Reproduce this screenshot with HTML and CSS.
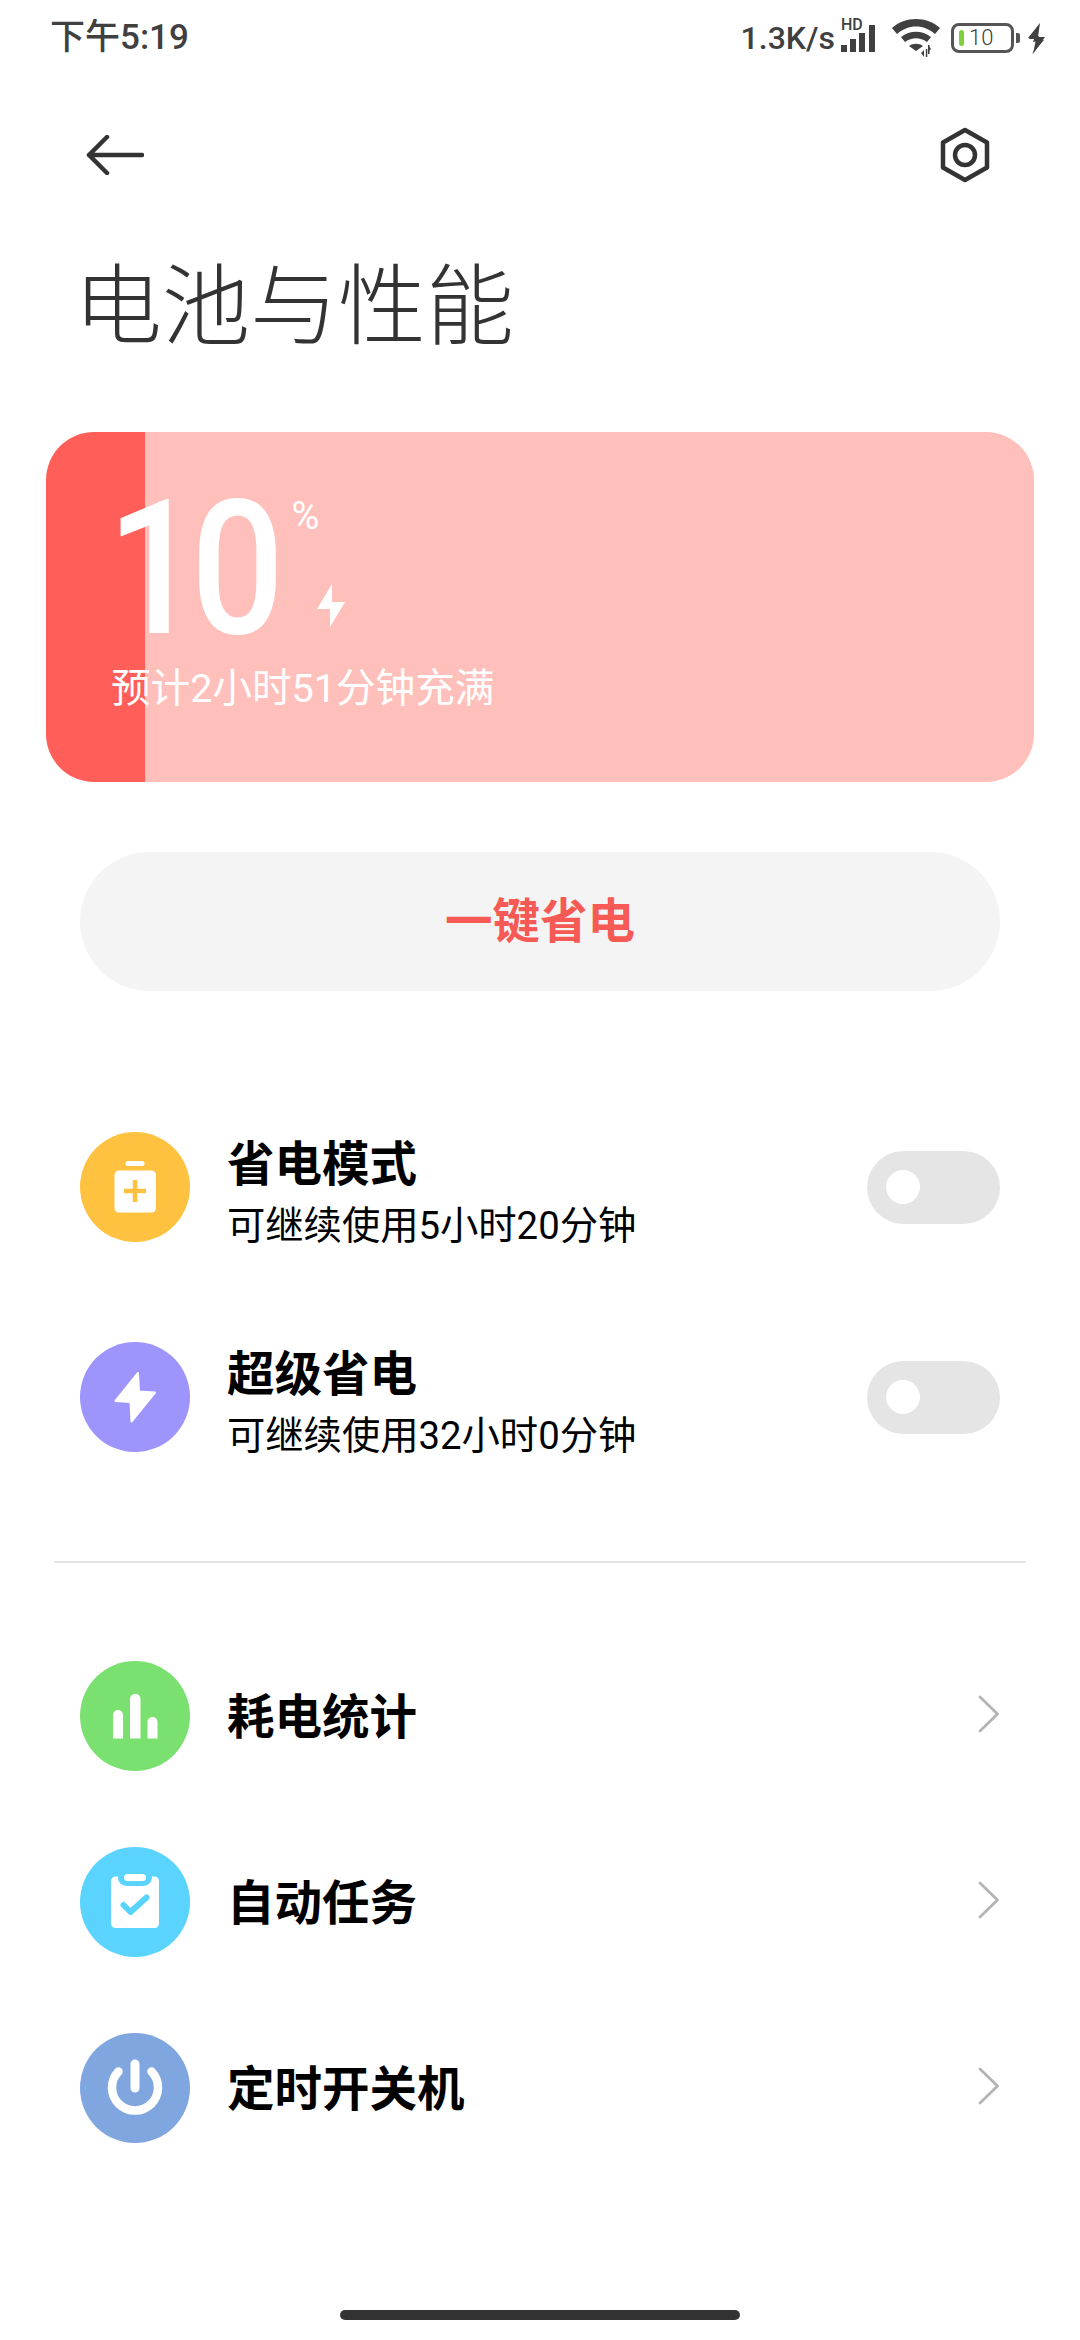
FILE: index.html
```html
<!DOCTYPE html>
<html lang="zh-CN">
<head>
<meta charset="utf-8">
<title>电池与性能</title>
<link rel="stylesheet" href="styles.css">
</head>
<body>
<div class="app">
  <header class="status">
    <span class="time">下午5:19</span>
    <div class="status-right">
      <span class="speed">1.3K/s</span>
      <div class="signal">
        <span class="hd">HD</span>
        <svg class="signal-bars" width="39" height="28" viewBox="0 0 39 28"><g fill="#404040"><rect x="0" y="20" width="6" height="7"/><rect x="9" y="14" width="6" height="13"/><rect x="18" y="8" width="6" height="19"/><rect x="28" y="0" width="6" height="27"/></g></svg>
      </div>
      <svg class="wifi" width="50" height="38" viewBox="0 0 50 38"><g fill="#404040"><path d="M1 9C14-3 36-3 49 9l-5 6C33 5 17 5 6 15z"/><path d="M10 18c9-7 21-7 30 0l-4 5c-7-5-15-5-22 0z"/><path d="M18 27c4-3 10-3 14 0l-7 5z"/><path d="M33 38v-7l-3 3zM37 26v7l3-3z"/><rect x="34.800" y="30" width="1.500" height="8"/><rect x="37" y="26" width="1.500" height="9"/></g></svg>
      <div class="battery">
        <div class="battery-body"><i class="battery-level"></i><span>10</span></div>
        <i class="battery-nub"></i>
      </div>
      <svg class="charge" width="19" height="31" viewBox="0 0 19 31"><path d="M13 0 1 15l6 1-1 3 6-1-7 13 12-14-6-1 1-3-6 1z" fill="#404040"/><path d="M13 0 2 16h7L6 31l12-17h-7z" fill="#404040"/></svg>
    </div>
  </header>

  <nav class="toolbar">
    <svg width="58" height="40" viewBox="0 0 58 40"><path d="M56 20H3M21 2 3 20l18 18" fill="none" stroke="#333" stroke-width="4.500" stroke-linecap="round" stroke-linejoin="round"/></svg>
    <svg width="52" height="56" viewBox="0 0 52 56"><path d="M26 3 48 15.500v25L26 53 4 40.500v-25z" fill="none" stroke="#333" stroke-width="4.500" stroke-linejoin="round"/><circle cx="26" cy="28" r="10" fill="none" stroke="#333" stroke-width="4.500"/></svg>
  </nav>

  <h1 class="title">电池与性能</h1>

  <section class="card">
    <div class="hero">
      <span class="level">10</span>
      <div class="hero-side">
        <span class="percent">%</span>
        <svg class="card-bolt" width="28" height="43" viewBox="0 0 28 43"><path d="M15 0 0 25h13l0 18L28 18H15z" fill="#fff"/></svg>
      </div>
    </div>
    <p class="eta">预计2小时51分钟充满</p>
  </section>

  <button class="saver">一键省电</button>

  <section class="modes">
    <div class="row">
      <svg class="icon" viewBox="0 0 110 110"><circle cx="55" cy="55" r="55" fill="#ffc240"/><rect x="45.500" y="29" width="19" height="5" rx="2.500" fill="#fff"/><rect x="34.500" y="38.500" width="41.500" height="42" rx="4.500" fill="#fff"/><path d="M55 48v22M44 59h22" stroke="#ffc240" stroke-width="4.500"/></svg>
      <div class="row-text">
        <div class="row-title">省电模式</div>
        <div class="row-sub">可继续使用5小时20分钟</div>
      </div>
      <div class="toggle"><i class="knob"></i></div>
    </div>
    <div class="row">
      <svg class="icon" viewBox="0 0 110 110"><circle cx="55" cy="55" r="55" fill="#9d94fc"/><path d="M58 31 35.500 59 50.500 60 51.500 79.500 75 50.500 59 49.500z" fill="#fff" stroke="#fff" stroke-width="2" stroke-linejoin="round"/></svg>
      <div class="row-text">
        <div class="row-title">超级省电</div>
        <div class="row-sub">可继续使用32小时0分钟</div>
      </div>
      <div class="toggle"><i class="knob"></i></div>
    </div>
  </section>

  <hr class="divider">

  <section class="links">
    <div class="row">
      <svg class="icon" viewBox="0 0 110 110"><circle cx="55" cy="55" r="55" fill="#7ae070"/><g fill="#fff"><path d="M33 77.500V54a5 5 0 0 1 10 0v23.500z"/><path d="M50 77.500V38a5 5 0 0 1 10.500 0v39.500z"/><path d="M67.500 77.500V61a5 5 0 0 1 10 0v16.500z"/></g></svg>
      <div class="row-text"><div class="row-title">耗电统计</div></div>
      <svg class="chevron" width="22" height="38" viewBox="0 0 22 38"><path d="M2 2 19.500 19 2 36" fill="none" stroke="#b4b4b4" stroke-width="2.800" stroke-linecap="round" stroke-linejoin="round"/></svg>
    </div>
    <div class="row">
      <svg class="icon" viewBox="0 0 110 110"><circle cx="55" cy="55" r="55" fill="#5ad4ff"/><rect x="31" y="29.500" width="48" height="51.500" rx="4.500" fill="#fff"/><rect x="38" y="22" width="34" height="17" rx="8.500" fill="#5ad4ff"/><rect x="44" y="27" width="22" height="7" rx="3.500" fill="#fff"/><path d="M43.500 58 50.500 65 66.500 50.500" fill="none" stroke="#5ad4ff" stroke-width="6" stroke-linecap="round" stroke-linejoin="round"/></svg>
      <div class="row-text"><div class="row-title">自动任务</div></div>
      <svg class="chevron" width="22" height="38" viewBox="0 0 22 38"><path d="M2 2 19.500 19 2 36" fill="none" stroke="#b4b4b4" stroke-width="2.800" stroke-linecap="round" stroke-linejoin="round"/></svg>
    </div>
    <div class="row">
      <svg class="icon" viewBox="0 0 110 110"><circle cx="55" cy="55" r="55" fill="#7fa6df"/><path d="M38.500 38.500A23 23 0 1 0 71.500 38.500" fill="none" stroke="#fff" stroke-width="8.500" stroke-linecap="round"/><path d="M55 31V55" fill="none" stroke="#fff" stroke-width="9" stroke-linecap="round"/></svg>
      <div class="row-text"><div class="row-title">定时开关机</div></div>
      <svg class="chevron" width="22" height="38" viewBox="0 0 22 38"><path d="M2 2 19.500 19 2 36" fill="none" stroke="#b4b4b4" stroke-width="2.800" stroke-linecap="round" stroke-linejoin="round"/></svg>
    </div>
  </section>

  <div class="home-bar"></div>
</div>
</body>
</html>
```

FILE: styles.css
```css
* { box-sizing: border-box; }
html, body { margin: 0; padding: 0; background: #fff; }
body { font-family: Roboto, "Noto Sans CJK SC", sans-serif; }
.app { width: 1080px; height: 2340px; display: flex; flex-direction: column; overflow: hidden; background: #fff; }

.status { height: 76px; flex: none; display: flex; align-items: center; justify-content: space-between; padding: 0 34px 0 50px; color: #404040; }
.time { font-size: 35px; font-weight: 500; line-height: 40px; }
.status-right { display: flex; align-items: center; }
.speed { font-size: 32px; font-weight: 500; line-height: 40px; }
.signal { position: relative; width: 39px; height: 30px; margin-left: 6px; display: flex; align-items: flex-end; }
.hd { position: absolute; left: 0; top: -6px; font-size: 16px; font-weight: 500; line-height: 16px; }
.signal-bars { display: block; }
.wifi { margin-left: 11px; display: block; }
.battery { margin-left: 10px; display: flex; align-items: center; }
.battery-body { width: 63px; height: 30px; border: 3.500px solid #555; border-radius: 8px; display: flex; align-items: center; padding-left: 5px; }
.battery-level { width: 5px; height: 16px; border-radius: 2.500px; background: #7ed03c; flex: none; }
.battery-body span { font-size: 22px; font-weight: 300; line-height: 22px; margin-left: 5px; color: #404040; }
.battery-nub { width: 4px; height: 10px; margin-left: 2px; border-radius: 0 2px 2px 0; background: #555; }
.charge { margin-left: 7px; display: block; }

.toolbar { height: 80px; flex: none; margin-top: 39px; padding: 0 89px 0 86px; display: flex; align-items: center; justify-content: space-between; }

.title { margin: 52px 0 0 74px; font-size: 88px; line-height: 104px; font-weight: 300; color: #333; font-family: "Noto Sans CJK SC", sans-serif; flex: none; }

.card { height: 350px; flex: none; margin: 81px 46px 0; padding: 66px 0 0 65px; border-radius: 48px; color: #fff; background: linear-gradient(90deg, #ff5f58 99px, #ffbfbb 99px); }
.hero { display: flex; height: 133px; }
.level { display: block; height: 133px; padding-top: 5px; font-size: 187px; line-height: 133px; font-weight: 500; letter-spacing: -11px; margin-left: -4px; transform: scaleX(.88); transform-origin: left top; }
.hero-side { display: flex; flex-direction: column; margin-left: -6px; }
.percent { font-size: 38px; line-height: 36px; font-weight: 400; }
.card-bolt { margin: 50px 0 0 25px; display: block; }
.eta { margin: 33px 0 0; font-size: 39.600px; line-height: 50px; font-weight: 400; }

.saver { height: 139px; flex: none; margin: 70px 80px 0; padding: 2px 0 0; border: 0; border-radius: 70px; background: #f4f4f4; color: #f75a55; font: 700 47.500px/1 Roboto, "Noto Sans CJK SC", sans-serif; }

.modes { margin: 141px 80px 0; display: flex; flex-direction: column; gap: 100px; flex: none; }
.links { margin: 98px 80px 0; display: flex; flex-direction: column; gap: 76px; flex: none; }
.row { height: 110px; display: flex; align-items: center; }
.icon { width: 110px; height: 110px; flex: none; display: block; }
.row-text { flex: 1; margin-left: 37px; color: #000; }
.modes .row-text { padding-top: 11px; }
.links .row-text { padding-top: 3px; }
.row-title { font-size: 47.500px; line-height: 60px; font-weight: 700; }
.row-sub { font-size: 38.300px; line-height: 50px; font-weight: 400; margin-top: 6px; }
.toggle { width: 133px; height: 73px; border-radius: 37px; background: #e5e5e5; display: flex; align-items: center; padding-left: 19px; flex: none; }
.knob { width: 34px; height: 34px; border-radius: 50%; background: #fff; }
.chevron { display: block; flex: none; margin-top: -4px; }

.divider { height: 2px; flex: none; width: 972px; margin: 109px 0 0 54px; border: 0; background: #e4e4e4; }

.home-bar { width: 400px; height: 10px; flex: none; margin: auto 0 20px 340px; border-radius: 5px; background: #333; }
```
